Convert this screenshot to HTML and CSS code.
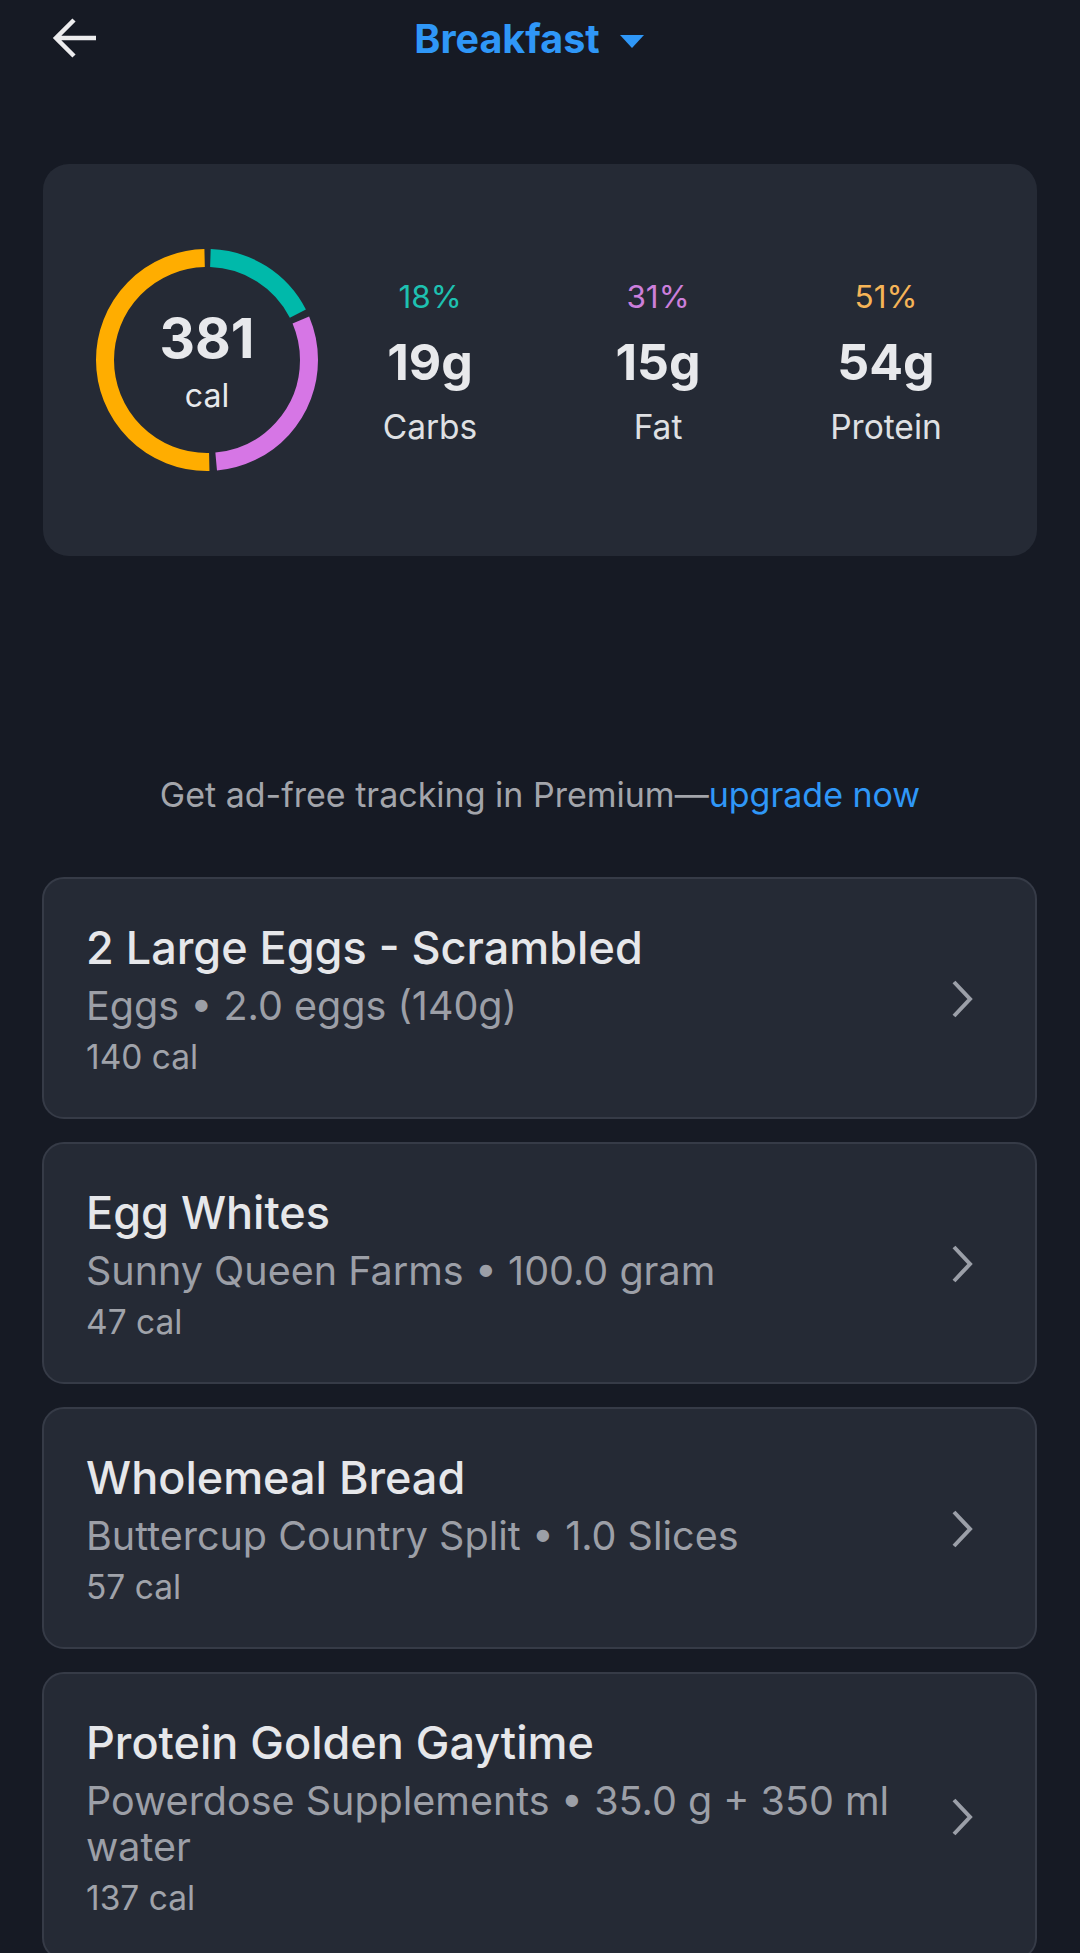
FILE: index.html
```html
<!DOCTYPE html>
<html lang="en">
<head>
    <meta charset="UTF-8">
    <meta name="viewport" content="width=device-width, initial-scale=1.0">
    <title>Breakfast</title>
    <link rel="stylesheet" href="styles.css">
</head>
<body>

    <!-- Top bar -->
    <header class="top-bar">
        <button class="back-btn" aria-label="Back">
            <svg width="44" height="44" viewBox="0 0 44 44">
                <path d="M44 21H6 M22 3L4 21L22 39" fill="none" stroke="#ececee" stroke-width="4.5" stroke-linecap="butt" stroke-linejoin="miter"/>
            </svg>
        </button>
        <button class="meal-picker">
            <span>Breakfast</span>
            <svg width="24" height="13" viewBox="0 0 24 13"><path d="M0 0H24L12 13Z" fill="#2f97f7"/></svg>
        </button>
        <div></div>
    </header>

    <!-- Calories / macros summary -->
    <section class="summary-card">
        <div class="ring">
            <svg width="222" height="222" viewBox="0 0 222 222">
                <g transform="rotate(-90 111 111)" fill="none" stroke-width="18">
                    <circle cx="111" cy="111" r="102" stroke="#00b9aa" stroke-dasharray="108.4 641" stroke-dashoffset="-3.5"/>
                    <circle cx="111" cy="111" r="102" stroke="#d676e5" stroke-dasharray="191.7 641" stroke-dashoffset="-118.9"/>
                    <circle cx="111" cy="111" r="102" stroke="#ffad00" stroke-dasharray="319.8 641" stroke-dashoffset="-317.6"/>
                </g>
            </svg>
            <div class="ring-label">
                <div class="ring-value">381</div>
                <div class="ring-unit">cal</div>
            </div>
        </div>
        <div class="macros">
            <div class="macro">
                <div class="macro-pct carbs">18%</div>
                <div class="macro-grams">19g</div>
                <div class="macro-name">Carbs</div>
            </div>
            <div class="macro">
                <div class="macro-pct fat">31%</div>
                <div class="macro-grams">15g</div>
                <div class="macro-name">Fat</div>
            </div>
            <div class="macro">
                <div class="macro-pct protein">51%</div>
                <div class="macro-grams">54g</div>
                <div class="macro-name">Protein</div>
            </div>
        </div>
    </section>

    <p class="premium">Get ad-free tracking in Premium—<a href="#">upgrade now</a></p>

    <!-- Logged foods -->
    <ul class="food-list">
        <li class="food-item">
            <div class="food-info">
                <div class="food-name">2 Large Eggs - Scrambled</div>
                <div class="food-desc">Eggs • 2.0 eggs (140g)</div>
                <div class="food-cal">140 cal</div>
            </div>
            <svg class="chevron" width="22" height="38" viewBox="0 0 22 38"><path d="M3 2L19 19L3 36" fill="none" stroke="#9b9fa8" stroke-width="4"/></svg>
        </li>
        <li class="food-item">
            <div class="food-info">
                <div class="food-name">Egg Whites</div>
                <div class="food-desc">Sunny Queen Farms • 100.0 gram</div>
                <div class="food-cal">47 cal</div>
            </div>
            <svg class="chevron" width="22" height="38" viewBox="0 0 22 38"><path d="M3 2L19 19L3 36" fill="none" stroke="#9b9fa8" stroke-width="4"/></svg>
        </li>
        <li class="food-item">
            <div class="food-info">
                <div class="food-name">Wholemeal Bread</div>
                <div class="food-desc">Buttercup Country Split • 1.0 Slices</div>
                <div class="food-cal">57 cal</div>
            </div>
            <svg class="chevron" width="22" height="38" viewBox="0 0 22 38"><path d="M3 2L19 19L3 36" fill="none" stroke="#9b9fa8" stroke-width="4"/></svg>
        </li>
        <li class="food-item">
            <div class="food-info">
                <div class="food-name">Protein Golden Gaytime</div>
                <div class="food-desc">Powerdose Supplements • 35.0 g + 350 ml water</div>
                <div class="food-cal">137 cal</div>
            </div>
            <svg class="chevron" width="22" height="38" viewBox="0 0 22 38"><path d="M3 2L19 19L3 36" fill="none" stroke="#9b9fa8" stroke-width="4"/></svg>
        </li>
    </ul>

</body>
</html>
```

FILE: styles.css
```css
body {
    margin: 0;
    background-color: #161a24;
    font-family: Inter, "Noto Sans", sans-serif;
    color: #e8e9ec;
    overflow: hidden;
}

button {
    background: none;
    border: none;
    padding: 0;
    font: inherit;
    cursor: pointer;
}

/* Top bar */
.top-bar {
    display: grid;
    grid-template-columns: 1fr auto 1fr;
    align-items: center;
    height: 78px;
}

.back-btn {
    justify-self: start;
    margin-left: 52px;
    display: flex;
}

.meal-picker {
    display: flex;
    align-items: center;
    gap: 20px;
    margin-right: 22px;
    color: #2f97f7;
    font-size: 39.5px;
    font-weight: 700;
}

.meal-picker svg {
    margin-top: 4px;
}

/* Summary card */
.summary-card {
    display: flex;
    align-items: center;
    margin: 86px 43px 0;
    height: 392px;
    padding-left: 53px;
    background-color: #252a35;
    border-radius: 26px;
}

.ring {
    position: relative;
    width: 222px;
    height: 222px;
    flex-shrink: 0;
}

.ring svg {
    display: block;
}

.ring-label {
    position: absolute;
    inset: 0;
    display: flex;
    flex-direction: column;
    align-items: center;
    justify-content: center;
    padding-top: 2px;
}

.ring-value {
    font-size: 55px;
    font-weight: 700;
    line-height: 62px;
}

.ring-unit {
    font-size: 32px;
    line-height: 38px;
    margin-top: 8px;
}

.macros {
    display: grid;
    grid-template-columns: repeat(3, 228px);
    margin-left: -2px;
    padding-top: 4px;
}

.macro {
    text-align: center;
}

.macro-pct {
    font-size: 31.5px;
    line-height: 40px;
}

.carbs { color: #1ec1b1; }
.fat { color: #cc7fdb; }
.protein { color: #f6b457; }

.macro-grams {
    font-size: 50px;
    font-weight: 700;
    line-height: 64px;
    margin-top: 13px;
}

.macro-name {
    font-size: 33.5px;
    line-height: 40px;
    margin-top: 13px;
    color: #dfe0e3;
}

/* Premium upsell */
.premium {
    margin: 217px 0 0;
    text-align: center;
    font-size: 34px;
    line-height: 44px;
    color: #a3a5ab;
}

.premium a {
    color: #2f97f7;
    text-decoration: none;
}

/* Food list */
.food-list {
    list-style: none;
    margin: 60px 43px 0 42px;
    padding: 0;
    display: flex;
    flex-direction: column;
    gap: 23px;
}

.food-item {
    display: flex;
    align-items: center;
    padding: 41px 62px 40px 42px;
    background-color: #252a35;
    border: 2px solid #363b47;
    border-radius: 22px;
}

.food-info {
    flex: 1;
    min-width: 0;
    padding-right: 40px;
}

.food-name {
    font-size: 45px;
    font-weight: 500;
    line-height: 56px;
    margin-bottom: 7px;
    color: #e6e7ea;
}

.food-desc {
    font-size: 39.5px;
    line-height: 46px;
    color: #9c9fa7;
}

.food-cal {
    font-size: 33.5px;
    line-height: 40px;
    margin-top: 8px;
    color: #a0a3aa;
}

.chevron {
    flex-shrink: 0;
}
```
